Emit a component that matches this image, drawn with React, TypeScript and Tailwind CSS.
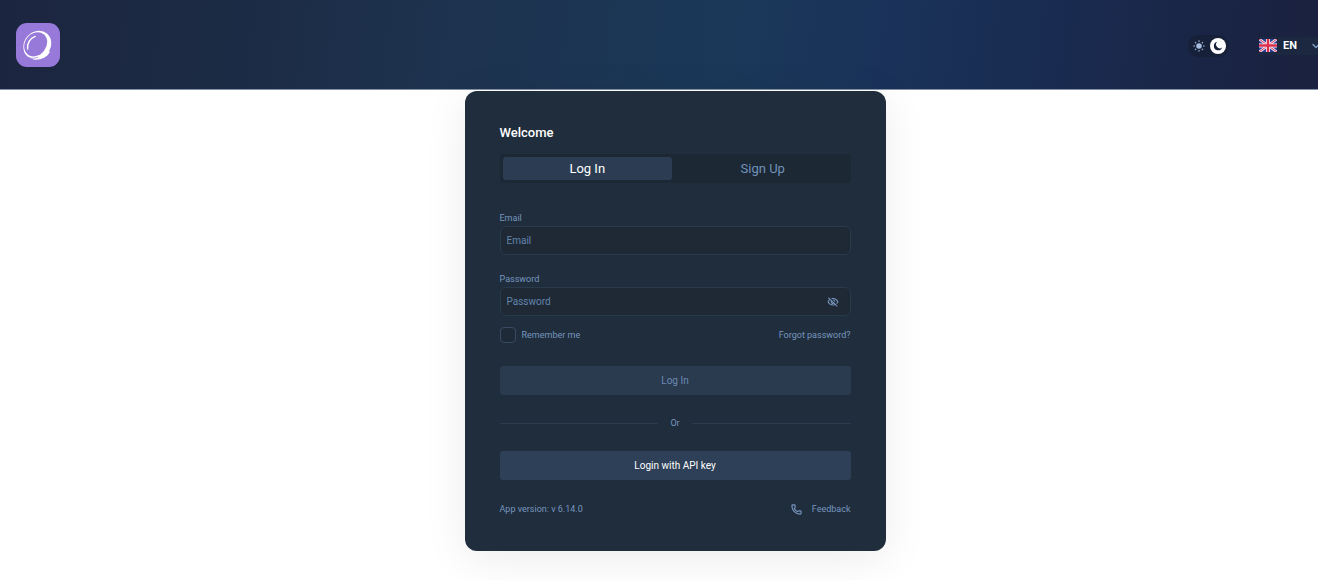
import { useState } from 'react';
import { ChevronDown, Phone } from 'lucide-react';
import { MdOutlineVisibilityOff, MdOutlineVisibility } from 'react-icons/md';

function Logo() {
    return (
        <svg viewBox="0 0 44 44" className="h-11 w-11" role="img" aria-label="Home">
            <rect width="44" height="44" rx="11" fill="#9679d8" />
            <ellipse cx="21.300" cy="22" rx="13.200" ry="15" transform="rotate(40 21.3 22)" fill="#fff" />
            <path d="M17 36.600c7 .8 14-1.500 17-8l-6-1-9 6.500z" fill="#fff" />
            <ellipse cx="19.700" cy="21.300" rx="10.600" ry="12.900" transform="rotate(38 19.7 21.3)" fill="#9679d8" />
            <path d="M12.500 34.700c3.400 1.100 6.500.7 9.500-.6" fill="none" stroke="#9679d8" strokeWidth=".7" />
            <path d="M11.600 26c-.6-6 2.400-11 7.600-12.600" fill="none" stroke="#fff" strokeWidth="1.500" strokeLinecap="round" />
        </svg>
    );
}

function FlagUK() {
    return (
        <svg viewBox="0 0 18 13" className="h-[13px] w-[18px] shrink-0" preserveAspectRatio="none" aria-hidden="true">
            <rect width="18" height="13" fill="#2c3f9b" />
            <path d="M0 0l18 13M18 0L0 13" stroke="#f3eff6" strokeWidth="2.600" />
            <path d="M0 0l18 13M18 0L0 13" stroke="#d8324f" strokeWidth="1" />
            <path d="M9 0v13M0 6.500h18" stroke="#f3eff6" strokeWidth="4" />
            <path d="M9 0v13M0 6.500h18" stroke="#dc2f4c" strokeWidth="2.400" />
        </svg>
    );
}

function ThemeSwitch() {
    const [dark, setDark] = useState(true);

    return (
        <button
            type="button"
            role="switch"
            aria-checked={dark}
            aria-label="Dark theme"
            onClick={() => setDark(!dark)}
            className="flex h-[22px] items-center gap-[3px] rounded-full bg-[#162038] px-[3px]"
        >
            <svg viewBox="0 0 16 16" className="h-4 w-4" stroke="#8fa3c8" strokeWidth="1.500" strokeLinecap="round">
                <circle cx="8" cy="8" r="2.800" fill="#a9bde0" stroke="none" />
                <path d="M8 3v.2M8 12.800v.2M3 8h.2M12.800 8h.2M4.500 4.500l.1.1M11.400 11.400l.1.1M4.500 11.500l.1-.1M11.400 4.600l.1-.1" />
            </svg>
            <svg viewBox="0 0 16 16" className="h-4 w-4">
                <circle cx="8" cy="8" r="8" fill="#fff" />
                <path d="M7.300 3.800a4.300 4.300 0 1 0 5 5.400 3.500 3.500 0 0 1-5-5.400z" fill="#18233c" />
            </svg>
        </button>
    );
}

function Header() {
    return (
        <header className="flex h-[90px] items-center justify-between overflow-hidden border-b border-[#8492a8] bg-[linear-gradient(97deg,#1c253f_0%,#1c2a43_15%,#1d334f_36%,#1b3859_55%,#1a3259_67%,#192b50_80%,#1a2343_94%,#1b223f_100%)] pl-4">
            <a href="#home">
                <Logo />
            </a>
            <div className="flex items-center gap-[30px] pt-0.5">
                <ThemeSwitch />
                <div className="relative -mr-1 flex items-center gap-[6px] bg-[#1b2840]">
                    <FlagUK />
                    <select
                        aria-label="Language"
                        defaultValue="EN"
                        className="h-[18px] w-[39px] appearance-none bg-transparent text-[11px] leading-[18px] font-bold text-white outline-none"
                    >
                        <option>EN</option>
                        <option>DE</option>
                        <option>FR</option>
                    </select>
                    <ChevronDown className="pointer-events-none absolute right-0 h-3 w-3 text-[#7f9bc4]" strokeWidth={3} />
                </div>
            </div>
        </header>
    );
}

export default function App() {
    const [tab, setTab] = useState<'login' | 'signup'>('login');
    const [showPassword, setShowPassword] = useState(false);

    const tabBase = 'flex-1 rounded-[3px] text-[13px] leading-[23px]';
    const tabActive = 'bg-[#2c3d53] text-white';
    const tabIdle = 'text-[#7193bb]';
    const field =
        'h-[29px] w-full rounded-md border border-[#293a4b] bg-[#1e2935] px-[6px] text-[10px] text-white placeholder:text-[#6384ad] outline-none';

    return (
        <div className="min-h-screen bg-white font-[Roboto,sans-serif]">
            <Header />

            <main className="flex justify-center pt-px pb-7 pl-8">
                <form
                    onSubmit={(e) => e.preventDefault()}
                    className="w-full max-w-[421px] rounded-xl bg-[#1f2d3c] px-[35px] pt-8 pb-[34px] text-[9px] leading-4 text-[#7896bf] shadow-[0_8px_44px_rgba(0,0,0,0.08)]"
                >
                    <h1 className="text-[13px] leading-5 font-medium text-white">Welcome</h1>

                    {/* Tabs */}
                    <div className="mt-[11px] flex gap-[6px] rounded bg-[#1d2835] p-[3px]">
                        <button type="button" onClick={() => setTab('login')} className={`${tabBase} ${tab === 'login' ? tabActive : tabIdle}`}>
                            Log In
                        </button>
                        <button type="button" onClick={() => setTab('signup')} className={`${tabBase} ${tab === 'signup' ? tabActive : tabIdle}`}>
                            Sign Up
                        </button>
                    </div>

                    {/* Credentials */}
                    <div className="mt-[27px] space-y-4">
                        <div>
                            <label htmlFor="email" className="block">Email</label>
                            <input id="email" type="email" placeholder="Email" className={field} />
                        </div>
                        <div>
                            <label htmlFor="password" className="block">Password</label>
                            <div className="relative">
                                <input id="password" type={showPassword ? 'text' : 'password'} placeholder="Password" className={field} />
                                <button
                                    type="button"
                                    aria-label="Show password"
                                    onClick={() => setShowPassword(!showPassword)}
                                    className="absolute inset-y-0 right-3 flex items-center"
                                >
                                    {showPassword ? <MdOutlineVisibility className="h-3 w-3" /> : <MdOutlineVisibilityOff className="h-3 w-3" />}
                                </button>
                            </div>
                        </div>
                    </div>

                    <div className="mt-[11px] flex items-center justify-between">
                        <label className="flex items-center gap-[6px]">
                            <input
                                type="checkbox"
                                className="h-4 w-4 appearance-none rounded border border-[#3a4b61] bg-[#1e2a37] checked:bg-[#7896bf]"
                            />
                            Remember me
                        </label>
                        <a href="#forgot">Forgot password?</a>
                    </div>

                    <button type="submit" className="mt-[23px] h-[29px] w-full rounded-[3px] bg-[#2a3a4f] text-[10px] text-[#6c8bb3]">
                        Log In
                    </button>

                    {/* Divider */}
                    <div className="my-5 flex items-center gap-3">
                        <span className="h-px flex-1 bg-[#2a3b4d]" />
                        <span>Or</span>
                        <span className="h-px flex-1 bg-[#2a3b4d]" />
                    </div>

                    <button type="button" className="h-[29px] w-full rounded-[3px] bg-[#2d4058] text-[10px] text-white">
                        Login with API key
                    </button>

                    <div className="mt-[21px] flex items-center justify-between">
                        <span>App version: v 6.14.0</span>
                        <a href="#feedback" className="flex items-center gap-[10px]">
                            <Phone className="h-[11px] w-[11px]" strokeWidth={2.5} />
                            Feedback
                        </a>
                    </div>
                </form>
            </main>
        </div>
    );
}
